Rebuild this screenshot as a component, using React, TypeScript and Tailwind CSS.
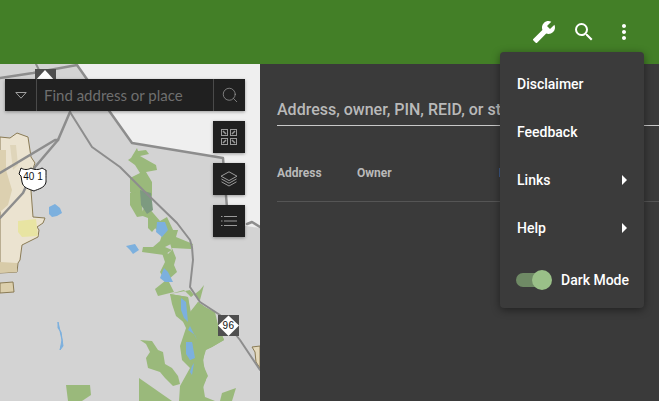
import { MdBuild, MdSearch, MdMoreVert, MdArrowRight } from 'react-icons/md';
import { Search } from 'lucide-react';

const greens = [
  '137,148 138,151 146,150 149,154 140,156 147,160 156,165 157,170 146,172 152,182 152,195 148,207 154,214 160,221 167,217 174,232 178,230 172,238 175,242 165,247 172,250 164,255 142,252 143,247 153,247 160,241 162,235 152,225 148,218 140,215 146,205 140,200 130,192 130,178 140,173 135,165 128,160 131,158',
  '130,193 140,192 142,205 143,216 137,217 130,205',
  '148,218 152,216 158,225 152,232 148,228',
  '166,230 178,230 176,237 193,244 191,249 172,248 176,258 174,265 177,272 168,280 174,292 158,296 155,289 165,281 160,272 165,262 162,253 165,248 168,254 172,250',
  '170,294 184,290 191,297 200,290 204,285 200,300 194,295 190,290',
  '170,294 188,297 191,313 198,302 205,307 215,312 218,325 224,340 212,347 205,350 203,362 200,372 203,358 206,380 200,395 202,362',
  '170,294 188,297 190,312 198,302 212,312 218,325 224,340 212,347 206,350 202,362 208,376 203,385 205,397 215,401 190,401 179,401 180,386 190,368 182,360 180,346 187,325 176,316 172,304',
  '140,340 152,341 158,350 163,352 165,364 172,368 178,376 180,384 173,386 165,378 160,372 148,368 146,358 150,352 146,344',
  '139,378 172,401 139,401',
  '66,385 90,385 91,395 82,401 68,401',
  '222,393 236,388 232,401 220,401',
];

const blues = [
  '49,207 55,204 60,208 62,213 57,216 52,217 49,214',
  '157,222 165,222 168,230 162,237 156,232',
  '126,246 135,244 139,250 133,254 130,250',
  '164,268 168,272 173,282 165,282 160,278',
  '181,298 186,302 188,322 184,318 181,310',
  '186,343 192,342 195,358 190,360 187,352',
  '190,326 197,340 195,335 188,330',
  '186,342 192,342 194,358 190,360 186,354',
  '192,366 194,363 192,375 190,372',
];

function MapArt() {
  return (
    <svg className="block h-full w-full" viewBox="0 64 260 337" fill="none">
      <rect x="0" y="64" width="260" height="337" fill="#d3d3d3" />
      <polygon points="77,64 132,143 223,158 227,223 260,228 260,64" fill="#efefef" />
      <polygon
        points="0,137 10,138 17,133 28,137 31,157 35,163 30,177 33,217 45,218 43,223 37,227 39,230 38,237 22,245 20,260 18,263 17,272 0,273"
        fill="#ebe3d0"
        stroke="#8a7b55"
      />
      <polygon points="0,262 17,263 17,272 0,273" fill="#d8cba8" />
      <polygon points="0,150 6,150 6,170 12,190 8,205 0,212" fill="#dcd0b0" />
      <polygon points="10,145 16,145 18,165 13,170" fill="#dfd5ba" />
      <polygon points="18,221 36,219 38,236 22,237 18,232" fill="#e8e4a2" />
      <polygon points="0,283 13,282 14,292 0,293" fill="#dccfac" stroke="#8a7b55" />
      <polygon points="252,347 260,346 260,368 256,362 255,352" fill="#e3d8bb" stroke="#8a7b55" />
      {greens.map((p) => (
        <polygon key={p} points={p} fill="#9ab97b" />
      ))}
      <polygon points="140,190 151,193 153,210 147,214 141,205" fill="#7d9a80" />
      {blues.map((p) => (
        <polygon key={p} points={p} fill="#7cb0de" />
      ))}
      <polygon points="58,322 62,340 60,350 63,346 61,332 58,328" fill="#7cb0de" stroke="#7cb0de" />
      <g stroke="#8d8d8d" strokeLinejoin="round" strokeLinecap="round">
        <polyline strokeWidth="2.5" points="0,78 33,73 77,65 110,112 132,143 223,158 227,208" />
        <polyline strokeWidth="2.5" points="247,224 252,222 260,227" />
        <polyline strokeWidth="2" points="36,64 44,80" />
        <polyline strokeWidth="2.5" points="70,112 58,140 35,167 23,193 0,218" />
        <polyline strokeWidth="2.5" points="0,173 55,140 58,140" />
        <polyline strokeWidth="2" points="70,112 92,147 120,167 143,190 177,223 190,240 192,247 193,260 190,287 200,302 220,315 240,340 260,370" />
      </g>
      <rect x="35" y="69" width="21" height="20" fill="#4f4f4f" />
      <polygon points="45,70 56,82 45,94 34,82" fill="#fff" />
      <path
        d="M21 168c3 2 7 2 10 0 3 2 8 2 11 0 2 1 3 2 4 2 0 6 0 9 0 12-1 6-8 7-12 9-5-2-11-3-12-9l-1-6-2-2c1-2 1-4 2-6z"
        fill="#fff"
        stroke="#111"
        strokeWidth="1"
      />
      <text x="33" y="180" fontSize="10" fill="#111" textAnchor="middle" fontFamily="Liberation Sans, sans-serif">
        40 1
      </text>
      <rect x="218" y="315" width="21" height="21" fill="#4f4f4f" />
      <polygon points="228.5,315.5 239,325.5 228.5,336 218,325.5" fill="#fff" />
      <text x="228.5" y="329" fontSize="10" letterSpacing="0.5" fill="#111" textAnchor="middle" fontFamily="Liberation Sans, sans-serif">
        96
      </text>
    </svg>
  );
}

function GridGlyph() {
  return (
    <svg width="18" height="18" viewBox="0 0 18 18" fill="none" stroke="#9a9a9a" strokeWidth="1">
      <rect x="1.5" y="1.5" width="6" height="6" />
      <rect x="10.5" y="1.5" width="6" height="6" />
      <rect x="1.5" y="10.5" width="6" height="6" />
      <rect x="10.5" y="10.5" width="6" height="6" />
      <path d="M3 3l3 3M12 6l3-3M3 15l3-3M12 12l3 3" strokeWidth="1.5" />
    </svg>
  );
}

function LayersGlyph() {
  return (
    <svg width="18" height="16" viewBox="0 0 18 16" fill="none" stroke="#9a9a9a" strokeWidth="1">
      <path d="M9 .8 17 5.2 9 9.6 1 5.2z" />
      <path d="M1.5 8 9 12.2 16.5 8" />
      <path d="M1.5 10.8 9 15 16.5 10.8" />
    </svg>
  );
}

function ListGlyph() {
  return (
    <svg width="16" height="12" viewBox="0 0 16 12" fill="none" stroke="#9a9a9a" strokeWidth="1">
      <path d="M0 1.5h1.5M3 1.5h13M0 6h1.5M3 6h13M0 10.5h1.5M3 10.5h13" />
    </svg>
  );
}

function MapTool({ children }: { children: React.ReactNode }) {
  return (
    <div className="flex h-8 w-8 items-center justify-center bg-[#202020] shadow-[0_1px_3px_rgba(0,0,0,0.35)]">
      {children}
    </div>
  );
}

function MenuRow({ label, arrow }: { label: string; arrow?: boolean }) {
  return (
    <div className="flex h-12 items-center justify-between pl-[17px] pr-[10px]">
      <span>{label}</span>
      {arrow && <MdArrowRight size={24} className="-mr-0.5 text-white" />}
    </div>
  );
}

export default function App() {
  return (
    <div className="flex h-[401px] w-[659px] flex-col overflow-hidden bg-[#3a3a3a] font-['Roboto',sans-serif]">
      {/* Top bar */}
      <header className="flex h-16 shrink-0 items-center justify-end gap-4 bg-[#437f27] pr-[23px] text-white">
        <MdBuild size={24} className="-scale-x-100" />
        <MdSearch size={24} />
        <MdMoreVert size={24} />
      </header>

      <div className="relative flex min-h-0 flex-1">
        {/* Map */}
        <div className="relative w-[260px] shrink-0">
          <MapArt />
          <div className="absolute left-[5px] top-[15px] flex h-8 w-[240px] items-stretch bg-[#202020] shadow-[0_1px_3px_rgba(0,0,0,0.35)]">
            <div className="flex w-[32px] items-center justify-center border-r border-[#4a4a4a]">
              <svg width="12" height="7" viewBox="0 0 12 7" fill="none" stroke="#a0a0a0">
                <path d="M.8.5h10.4L6 6.2z" />
              </svg>
            </div>
            <div className="flex flex-1 items-center pl-[7px] font-['Lato',sans-serif] text-[15px] text-[#6f6f6f]">
              Find address or place
            </div>
            <div className="flex w-[32px] items-center justify-center border-l border-[#4a4a4a]">
              <Search size={18} strokeWidth={1} color="#9a9a9a" />
            </div>
          </div>
          <div className="absolute left-[213px] top-[57px] flex flex-col gap-2.5">
            <MapTool><GridGlyph /></MapTool>
            <MapTool><LayersGlyph /></MapTool>
            <MapTool><ListGlyph /></MapTool>
          </div>
        </div>

        {/* Search panel */}
        <div className="min-w-0 flex-1 overflow-hidden pl-[17px] pt-[34px] text-[#b9b9b9]">
          <div className="h-[28px] w-[400px] whitespace-nowrap border-b border-[#c8c8c8] text-base font-medium leading-[24px]">
            Address, owner, PIN, REID, or street
          </div>
          <div className="mt-[18px] flex h-[58px] w-[400px] items-center border-b border-[#555] text-xs font-bold">
            <span className="w-20">Address</span>
            <span className="w-[142px]">Owner</span>
            <span>PIN</span>
          </div>
        </div>

        {/* Overflow menu */}
        <div className="absolute left-[500px] top-[-12px] w-[144px] rounded bg-[#3b3b3b] pt-2 text-sm font-medium text-white shadow-[0_2px_8px_rgba(0,0,0,0.45)]">
          <MenuRow label="Disclaimer" />
          <MenuRow label="Feedback" />
          <MenuRow label="Links" arrow />
          <MenuRow label="Help" arrow />
          <div className="flex h-[56px] items-center gap-[6px] pl-4">
            <div className="relative h-3.5 w-[34px]">
              <div className="absolute left-0 top-0 h-3.5 w-[30px] rounded-full bg-[#6f8a65]" />
              <div className="absolute -top-[3px] left-[16px] h-5 w-5 rounded-full bg-[#9ac088]" />
            </div>
            <span className="ml-[5px]">Dark Mode</span>
          </div>
        </div>
      </div>
    </div>
  );
}
